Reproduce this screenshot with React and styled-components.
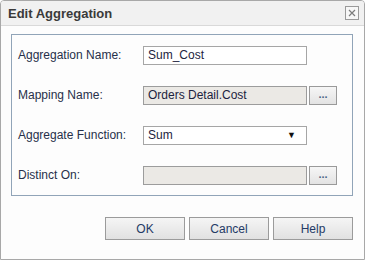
import { Fragment } from 'react';
import styled, { createGlobalStyle } from 'styled-components';

const GlobalStyle = createGlobalStyle`
  html, body {
    margin: 0;
    padding: 0;
    background: #ffffff;
  }
  * {
    box-sizing: border-box;
  }
`;

const StyledDialog = styled.div`
  width: 365px;
  height: 260px;
  display: flex;
  flex-direction: column;
  border: 1px solid #a8a8a8;
  border-radius: 4px 4px 0 0;
  background: #fdfdfd;
  font-family: 'Liberation Sans', Arial, sans-serif;
  font-size: 12px;
  color: #27304a;
  overflow: hidden;
`;

const StyledTitleBar = styled.div`
  height: 25px;
  display: flex;
  align-items: center;
  justify-content: space-between;
  padding: 0 5px 0 7px;
  background: #f1f1f1;
  border-bottom: 1px solid #d9d9d9;

  h1 {
    margin: 0;
    font-size: 13px;
    font-weight: bold;
    color: #3a3a3a;
  }
`;

const StyledCloseButton = styled.button`
  width: 14px;
  height: 14px;
  padding: 0;
  display: flex;
  align-items: center;
  justify-content: center;
  border: 1px solid #9a9a9a;
  background: #f7f7f7;
`;

const StyledFieldset = styled.div`
  margin: 8px 11px 0 10px;
  border: 1px solid #91a4b8;
  padding: 0 0 0 6px;
  display: grid;
  grid-template-columns: 123px 164px 28px;
  grid-auto-rows: 40px;
  column-gap: 2px;
  align-items: center;
`;

const StyledLabel = styled.label`
  color: #27304a;
  white-space: nowrap;
`;

const StyledInput = styled.div`
  height: 19px;
  display: flex;
  align-items: center;
  justify-content: space-between;
  padding: 0 3px 0 4px;
  border: 1px solid ${(p) => (p.$disabled ? '#9c9c9c' : '#a6a6a6')};
  background: ${(p) => (p.$disabled ? '#ebe9e5' : '#ffffff')};
  color: #1c2340;
`;

const StyledArrow = styled.span`
  font-size: 9px;
  color: #111;
  margin-right: 7px;
`;

const StyledBrowse = styled.button`
  height: 19px;
  width: 28px;
  padding: 0 0 3px;
  border: 1px solid #9a9a9a;
  background: linear-gradient(#f6f6f6, #e3e3e3);
  font-family: inherit;
  font-size: 11px;
  font-weight: bold;
  color: #4a6585;
`;

const StyledFooter = styled.div`
  display: flex;
  justify-content: flex-end;
  gap: 4px;
  margin: 21px 11px 0 0;
`;

const StyledButton = styled.button`
  width: 80px;
  height: 23px;
  border: 1px solid #9b9b9b;
  background: linear-gradient(#f5f5f5, #e1e1e1);
  font-family: 'Liberation Sans', Arial, sans-serif;
  font-size: 12px;
  color: #243a66;
`;

const rows = [
  { label: 'Aggregation Name:', value: 'Sum_Cost' },
  { label: 'Mapping Name:', value: 'Orders Detail.Cost', disabled: true, browse: true },
  { label: 'Aggregate Function:', value: 'Sum', select: true },
  { label: 'Distinct On:', value: '', disabled: true, browse: true },
];

const App = () => {
  return (
    <>
      <GlobalStyle />
      <StyledDialog>
        <StyledTitleBar>
          <h1>Edit Aggregation</h1>
          <StyledCloseButton aria-label="close">
            <svg width="8" height="8" viewBox="0 0 8 8">
              <path d="M1 1L7 7M7 1L1 7" stroke="#7d7d7d" strokeWidth="1.2" />
            </svg>
          </StyledCloseButton>
        </StyledTitleBar>
        <StyledFieldset>
          {rows.map((row) => (
            <Fragment key={row.label}>
              <StyledLabel>{row.label}</StyledLabel>
              <StyledInput $disabled={row.disabled}>
                <span>{row.value}</span>
                {row.select && <StyledArrow>▼</StyledArrow>}
              </StyledInput>
              {row.browse ? <StyledBrowse>...</StyledBrowse> : <span />}
            </Fragment>
          ))}
        </StyledFieldset>
        <StyledFooter>
          <StyledButton>OK</StyledButton>
          <StyledButton>Cancel</StyledButton>
          <StyledButton>Help</StyledButton>
        </StyledFooter>
      </StyledDialog>
    </>
  );
};

export default App;
